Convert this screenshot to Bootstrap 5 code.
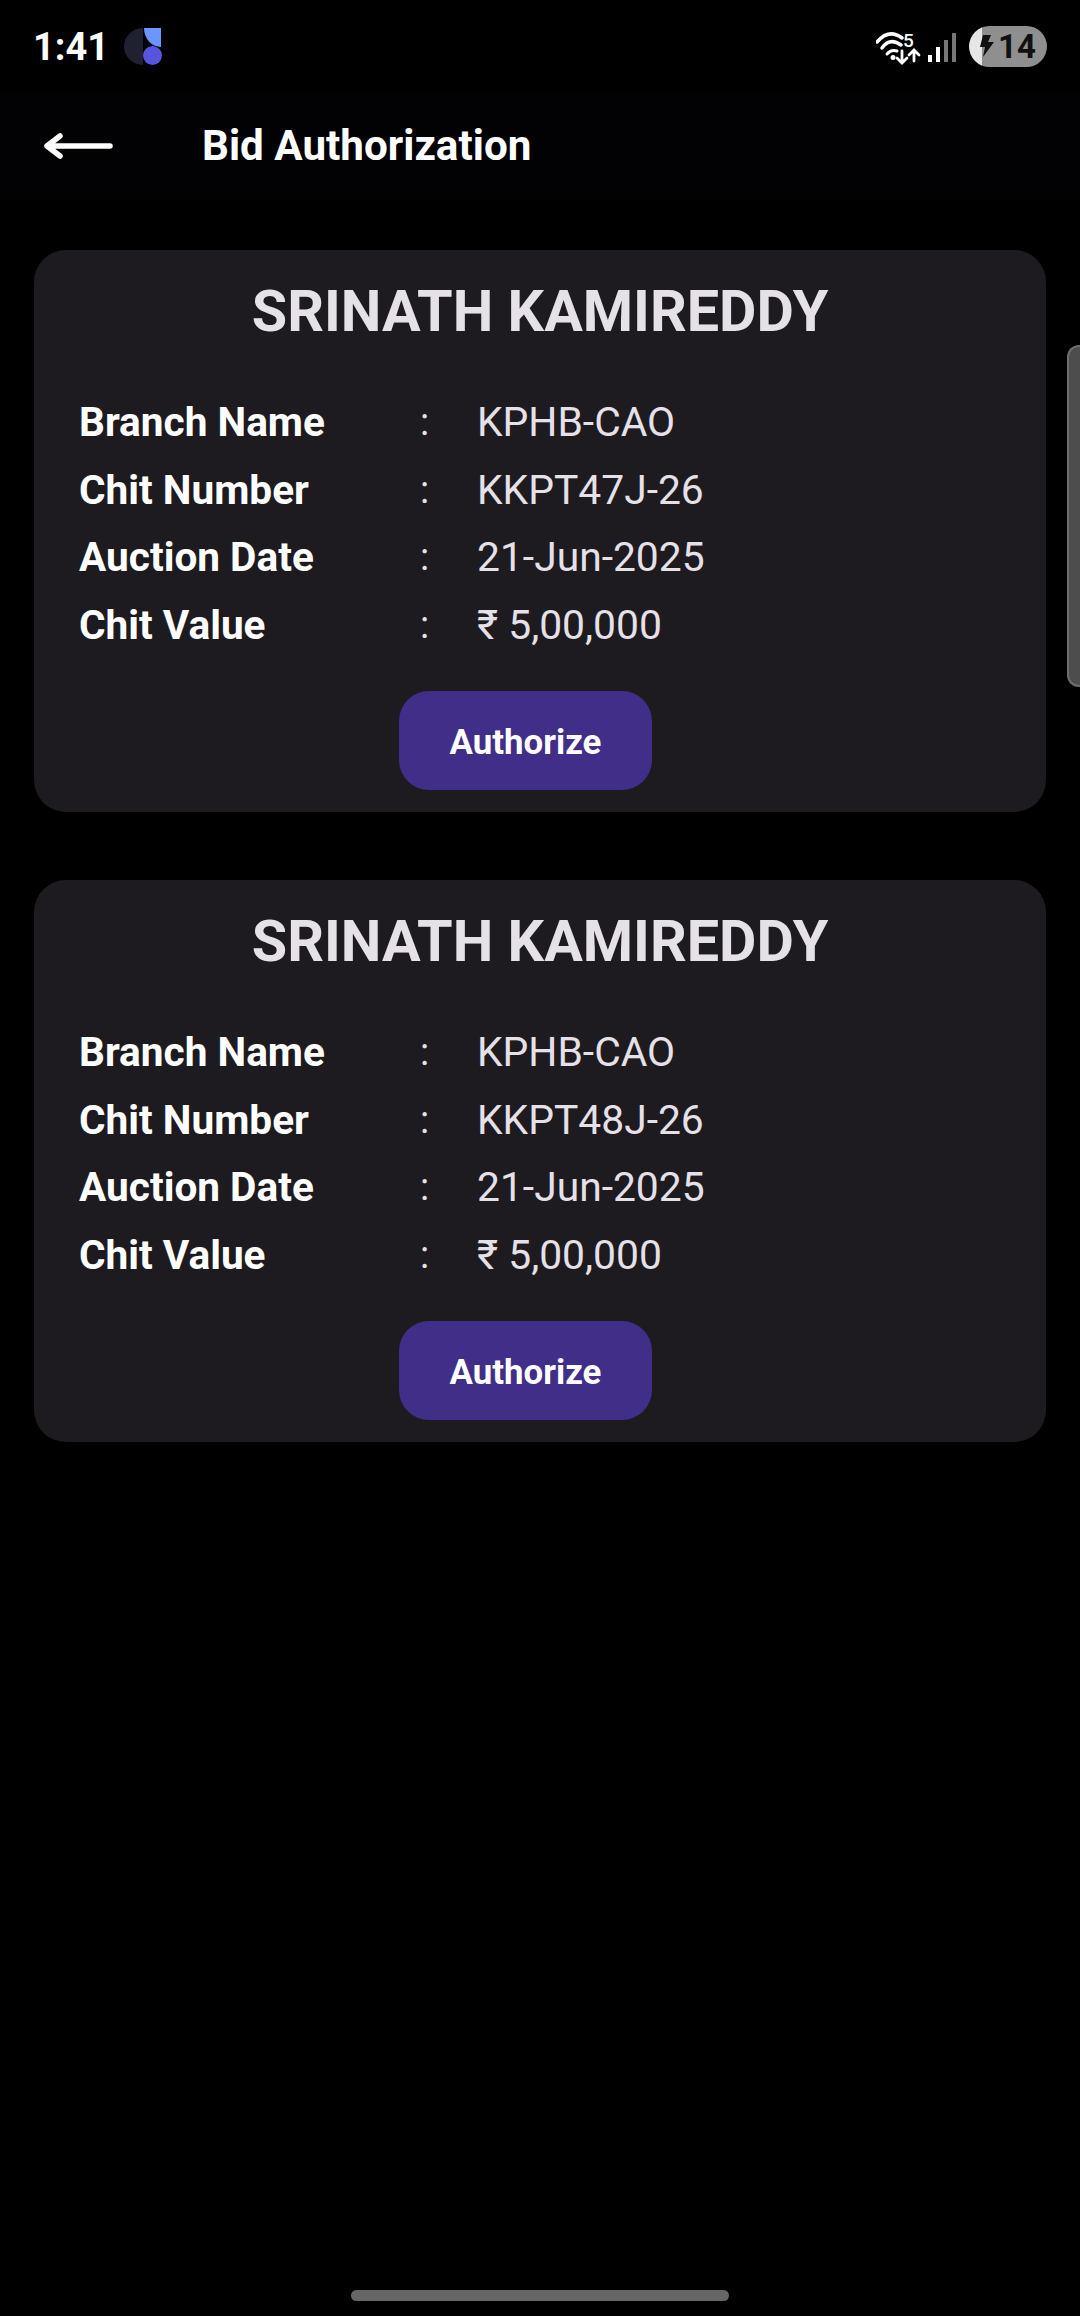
<!doctype html>
<html lang="en">
<head>
<meta charset="utf-8">
<title>Bid Authorization</title>
<link href="https://cdn.jsdelivr.net/npm/bootstrap@5.3.0/dist/css/bootstrap.min.css" rel="stylesheet">
<style>
html,body{background:#000;margin:0;height:100%}
body{font-family:Roboto,"Liberation Sans",sans-serif;color:#fff;position:relative;overflow:hidden}
.status-row{height:92px;padding:0 33px 0 33px}
.clock-text{font-size:38px;font-weight:700;line-height:1;margin-top:2px}
.logo-svg{margin-left:15px;margin-top:2px;display:block}
.batt-pill{width:78px;height:41px;border-radius:21px;background:linear-gradient(90deg,#e6e6e6 0 13px,#8f8f8f 13px);color:#111;font-size:33px;font-weight:700;line-height:1;padding-left:11px;margin-left:13px}
.app-row{height:108px;padding-left:44px;background:#020204}
.title-text{font-size:42.200px;font-weight:700;margin:0 0 0 89px;line-height:1}
.cards-wrap{padding:50px 34px 0;gap:68px}
.bid-card{background:#1d1b20;border:0;border-radius:32px;height:562px;padding:28px 0 0 0}
.bid-name{font-size:57.500px;font-weight:700;color:#e6e0e9;line-height:68px;margin:0}
.info-list{margin:43px 0 0 45px}
.info-line{height:67.5px;line-height:67.5px;white-space:nowrap}
.info-label{width:341px;font-weight:700;font-size:40.600px}
.info-colon{width:57px;color:#e6e0e9;font-size:38px}
.info-value{color:#e6e0e9;font-weight:400;font-size:40.800px}
.auth-btn{width:253px;height:99px;background:#402e88;color:#fff;border:0;border-radius:30px;font-size:34.800px;font-weight:700;margin:32px 0 0 365px;padding:3px 0 0}
.auth-btn:hover{background:#402e88;color:#fff}
.scroll-thumb{position:absolute;left:1067px;top:345px;width:13px;height:342px;background:#4d4d4d;border:2px solid #6e6e6e;border-right:0;border-radius:12px 0 0 12px}
.home-bar{position:absolute;left:351px;top:2290px;width:378px;height:11px;background:#666;border-radius:6px}
</style>
</head>
<body>
<div class="status-row d-flex align-items-center">
  <span class="clock-text">1:41</span>
  <svg class="logo-svg" width="38" height="38" viewBox="0 0 38 38"><path d="M19 0A19 18.500 0 0 0 19 37Z" fill="#1f2130"/><path d="M20 0H37V19A17 19 0 0 1 20 0Z" fill="#6b96ff"/><circle cx="28.500" cy="27.500" r="9.500" fill="#5555e0"/></svg>
  <div class="ms-auto d-flex align-items-center">
    <svg width="80" height="40" viewBox="0 0 80 40" fill="none" stroke="#fff" stroke-linecap="round">
      <path d="M1 16Q13 2 26 12" stroke-width="3.500"/><path d="M6 22Q14 11 25 19" stroke-width="3.500"/><path d="M11 28Q15 23 21 25" stroke-width="3"/><circle cx="17" cy="31.500" r="2.500" fill="#fff" stroke="none"/>
      <text x="27" y="21" font-family="Roboto,sans-serif" font-size="19" font-weight="500" fill="#fff" stroke="none">5</text>
      <path d="M26 25V37M21 32L26 37L31 32" stroke-width="2.800"/><path d="M38 35V24M33 29L38 24L43 29" stroke-width="2.800"/>
      <rect x="52" y="29" width="4" height="7" fill="#fff" stroke="none"/><rect x="60" y="21" width="4" height="15" fill="#fff" stroke="none"/><rect x="68" y="14" width="4" height="22" fill="#777" stroke="none"/><rect x="76" y="7" width="4" height="29" fill="#777" stroke="none"/>
    </svg>
    <div class="batt-pill d-flex align-items-center">
      <svg width="14" height="22" viewBox="0 0 14 22"><path d="M8 0H3L0 12H5L3 22L14 7H8L11 0Z" fill="#111"/></svg>
      <span class="ms-1">14</span>
    </div>
  </div>
</div>
<div class="app-row d-flex align-items-center">
  <svg width="69" height="26" viewBox="0 0 69 26" fill="none" stroke="#fff" stroke-width="5.500" stroke-linecap="round" stroke-linejoin="round"><path d="M66 13H4M16 3L3 13L16 23"/></svg>
  <h1 class="title-text">Bid Authorization</h1>
</div>
<main class="cards-wrap d-flex flex-column">
  <section class="card bid-card">
    <h2 class="bid-name text-center">SRINATH KAMIREDDY</h2>
    <div class="info-list">
      <div class="info-line d-flex"><span class="info-label">Branch Name</span><span class="info-colon">:</span><span class="info-value">KPHB-CAO</span></div>
      <div class="info-line d-flex"><span class="info-label">Chit Number</span><span class="info-colon">:</span><span class="info-value">KKPT47J-26</span></div>
      <div class="info-line d-flex"><span class="info-label">Auction Date</span><span class="info-colon">:</span><span class="info-value">21-Jun-2025</span></div>
      <div class="info-line d-flex"><span class="info-label">Chit Value</span><span class="info-colon">:</span><span class="info-value">₹ 5,00,000</span></div>
    </div>
    <button class="btn auth-btn" type="button">Authorize</button>
  </section>
  <section class="card bid-card">
    <h2 class="bid-name text-center">SRINATH KAMIREDDY</h2>
    <div class="info-list">
      <div class="info-line d-flex"><span class="info-label">Branch Name</span><span class="info-colon">:</span><span class="info-value">KPHB-CAO</span></div>
      <div class="info-line d-flex"><span class="info-label">Chit Number</span><span class="info-colon">:</span><span class="info-value">KKPT48J-26</span></div>
      <div class="info-line d-flex"><span class="info-label">Auction Date</span><span class="info-colon">:</span><span class="info-value">21-Jun-2025</span></div>
      <div class="info-line d-flex"><span class="info-label">Chit Value</span><span class="info-colon">:</span><span class="info-value">₹ 5,00,000</span></div>
    </div>
    <button class="btn auth-btn" type="button">Authorize</button>
  </section>
</main>
<div class="scroll-thumb"></div>
<div class="home-bar"></div>
<script src="https://cdn.jsdelivr.net/npm/bootstrap@5.3.0/dist/js/bootstrap.bundle.min.js"></script>
</body>
</html>
